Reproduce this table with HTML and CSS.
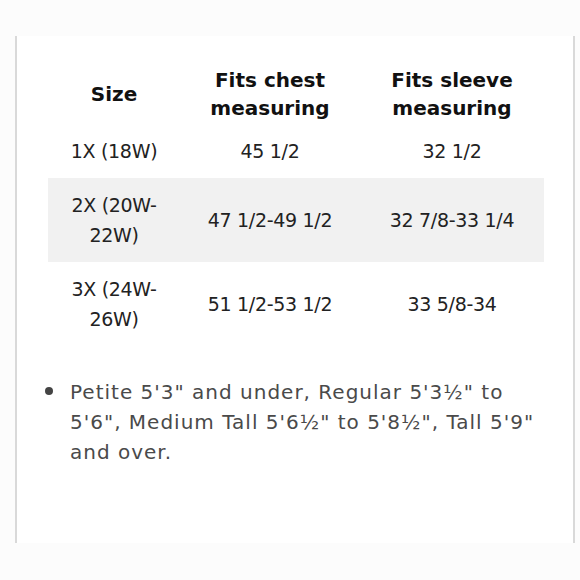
FILE: index.html
```html
<!DOCTYPE html>
<html lang="en">
<head>
<meta charset="utf-8">
<title>Size chart</title>
<link rel="stylesheet" href="styles.css">
</head>
<body>
<div class="card">
  <table class="chart">
    <colgroup>
      <col class="c-size">
      <col class="c-chest">
      <col class="c-sleeve">
    </colgroup>
    <thead>
      <tr>
        <th>Size</th>
        <th>Fits chest measuring</th>
        <th>Fits sleeve measuring</th>
      </tr>
    </thead>
    <tbody>
      <tr>
        <td>1X (18W)</td>
        <td>45 1/2</td>
        <td>32 1/2</td>
      </tr>
      <tr class="alt">
        <td>2X (20W-22W)</td>
        <td>47 1/2-49 1/2</td>
        <td>32 7/8-33 1/4</td>
      </tr>
      <tr>
        <td>3X (24W-26W)</td>
        <td>51 1/2-53 1/2</td>
        <td>33 5/8-34</td>
      </tr>
    </tbody>
  </table>
  <ul class="notes">
    <li>Petite 5'3" and under, Regular 5'3½" to 5'6", Medium Tall 5'6½" to 5'8½", Tall 5'9" and over.</li>
  </ul>
</div>
</body>
</html>
```
FILE: styles.css
```css
html, body {
  margin: 0;
  padding: 0;
}

body {
  background: #fcfcfc;
  padding-top: 36px;
  font-family: "DejaVu Sans", sans-serif;
}

.card {
  box-sizing: border-box;
  width: 560px;
  height: 507px;
  margin-left: 15px;
  padding-top: 30px;
  background: #ffffff;
  border-left: 2px solid #d9d9d9;
  border-right: 2px solid #d9d9d9;
}

.chart {
  width: 496px;
  margin-left: 31px;
  border-collapse: collapse;
  border-spacing: 0;
  table-layout: fixed;
}

.c-size { width: 132px; }
.c-chest { width: 180px; }
.c-sleeve { width: 184px; }

.chart th {
  padding: 0 0 2px;
  font-family: "DejaVu Sans", sans-serif;
  font-weight: bold;
  font-size: 20px;
  line-height: 28px;
  color: #111111;
  text-align: center;
  vertical-align: middle;
}

.chart td {
  padding: 12px 0;
  font-size: 19px;
  line-height: 30px;
  letter-spacing: -0.3px;
  color: #222222;
  text-align: center;
  vertical-align: middle;
}

.chart .alt td {
  background: #f1f1f1;
}

.notes {
  list-style: none;
  margin: 31px 0 0;
  padding: 0 29px 0 28px;
}

.notes li {
  display: flex;
  font-size: 20px;
  line-height: 30px;
  letter-spacing: 1px;
  color: #4a4a4a;
}

.notes li::before {
  content: "";
  flex: none;
  width: 8px;
  height: 8px;
  margin: 10px 17px 0 0;
  border-radius: 50%;
  background: #444444;
}
```
